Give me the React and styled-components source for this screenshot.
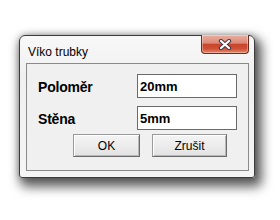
import React from 'react'
import styled, { createGlobalStyle } from 'styled-components'

const GlobalStyle = createGlobalStyle`
  html, body {
    margin: 0;
    padding: 0;
    background: #fff;
  }
  body {
    font-family: "Liberation Sans", Arial, sans-serif;
  }
`

const Page = styled.div`
  padding: 35px 0 40px 19px;
`

const Window = styled.div`
  width: 236px;
  height: 143px;
  box-sizing: border-box;
  border: 1px solid #3c3c3c;
  border-radius: 6px 6px 3px 3px;
  background: linear-gradient(#f8f8f8, #f0f0f0 30%, #f5f5f5);
  box-shadow: 4px 6px 11px 3px rgba(0, 0, 0, 0.62), 0 0 6px rgba(0, 0, 0, 0.25);
  display: flex;
  flex-direction: column;
  padding: 0 5px 6px 6px;
`

const TitleBar = styled.div`
  height: 27px;
  display: flex;
  align-items: flex-start;
  justify-content: space-between;
`

const Title = styled.span`
  font-size: 12px;
  color: #000;
  padding: 9px 0 0 2px;
  line-height: 14px;
`

const CloseButton = styled.div`
  width: 48px;
  height: 19px;
  box-sizing: border-box;
  margin-top: -1px;
  border: 1px solid #6e2a1c;
  border-top: none;
  border-radius: 0 0 4px 4px;
  background: linear-gradient(
    #eaaea0 0%,
    #dd8a77 45%,
    #c8452c 52%,
    #cf4f34 75%,
    #e4876a 100%
  );
  box-shadow: inset 0 0 0 1px rgba(255, 255, 255, 0.35);
  display: flex;
  align-items: center;
  justify-content: center;
`

const Panel = styled.div`
  flex: 1;
  border: 1px solid #8a8a8a;
  background: #f0f0f0;
  padding: 10px 11px 0 11px;
  display: flex;
  flex-direction: column;
`

const Form = styled.div`
  display: grid;
  grid-template-columns: 1fr 100px;
  row-gap: 8px;
  align-items: center;
`

const Label = styled.label`
  font-size: 14px;
  font-weight: bold;
  color: #000;
  padding-top: 2px;
  letter-spacing: -0.2px;
`

const Field = styled.div`
  height: 24px;
  box-sizing: border-box;
  border: 1px solid #6a6a6a;
  background: #fff;
  font-size: 13px;
  font-weight: bold;
  color: #000;
  display: flex;
  align-items: center;
  padding-left: 2px;
`

const Buttons = styled.div`
  display: flex;
  gap: 12px;
  margin-top: 4px;
  padding-left: 35px;
`

const Button = styled.button`
  width: ${({ $w }) => $w}px;
  height: 23px;
  box-sizing: border-box;
  border: 1px solid #9a9a9a;
  border-right-color: #6a6a6a;
  border-bottom-color: #6a6a6a;
  background: linear-gradient(#f4f4f4, #ececec 50%, #e2e2e2);
  box-shadow: inset 1px 1px 0 #fff, inset -1px -1px 0 #b8b8b8;
  font-family: "Liberation Sans", Arial, sans-serif;
  font-size: 12px;
  color: #000;
  padding: 0;
`

const CloseIcon = () => (
  <svg width="14" height="11" viewBox="0 0 14 11">
    <path d="M3 2 L11 9 M11 2 L3 9" stroke="#3b3b4a" strokeWidth="4.2" strokeLinecap="round" />
    <path d="M3 2 L11 9 M11 2 L3 9" stroke="#fff" strokeWidth="2.2" strokeLinecap="round" />
  </svg>
)

export default function App() {
  return (
    <Page>
      <GlobalStyle />
      <Window>
        <TitleBar>
          <Title>Víko trubky</Title>
          <CloseButton>
            <CloseIcon />
          </CloseButton>
        </TitleBar>
        <Panel>
          <Form>
            <Label>Poloměr</Label>
            <Field>20mm</Field>
            <Label>Stěna</Label>
            <Field>5mm</Field>
          </Form>
          <Buttons>
            <Button $w={67}>OK</Button>
            <Button $w={75}>Zrušit</Button>
          </Buttons>
        </Panel>
      </Window>
    </Page>
  )
}
